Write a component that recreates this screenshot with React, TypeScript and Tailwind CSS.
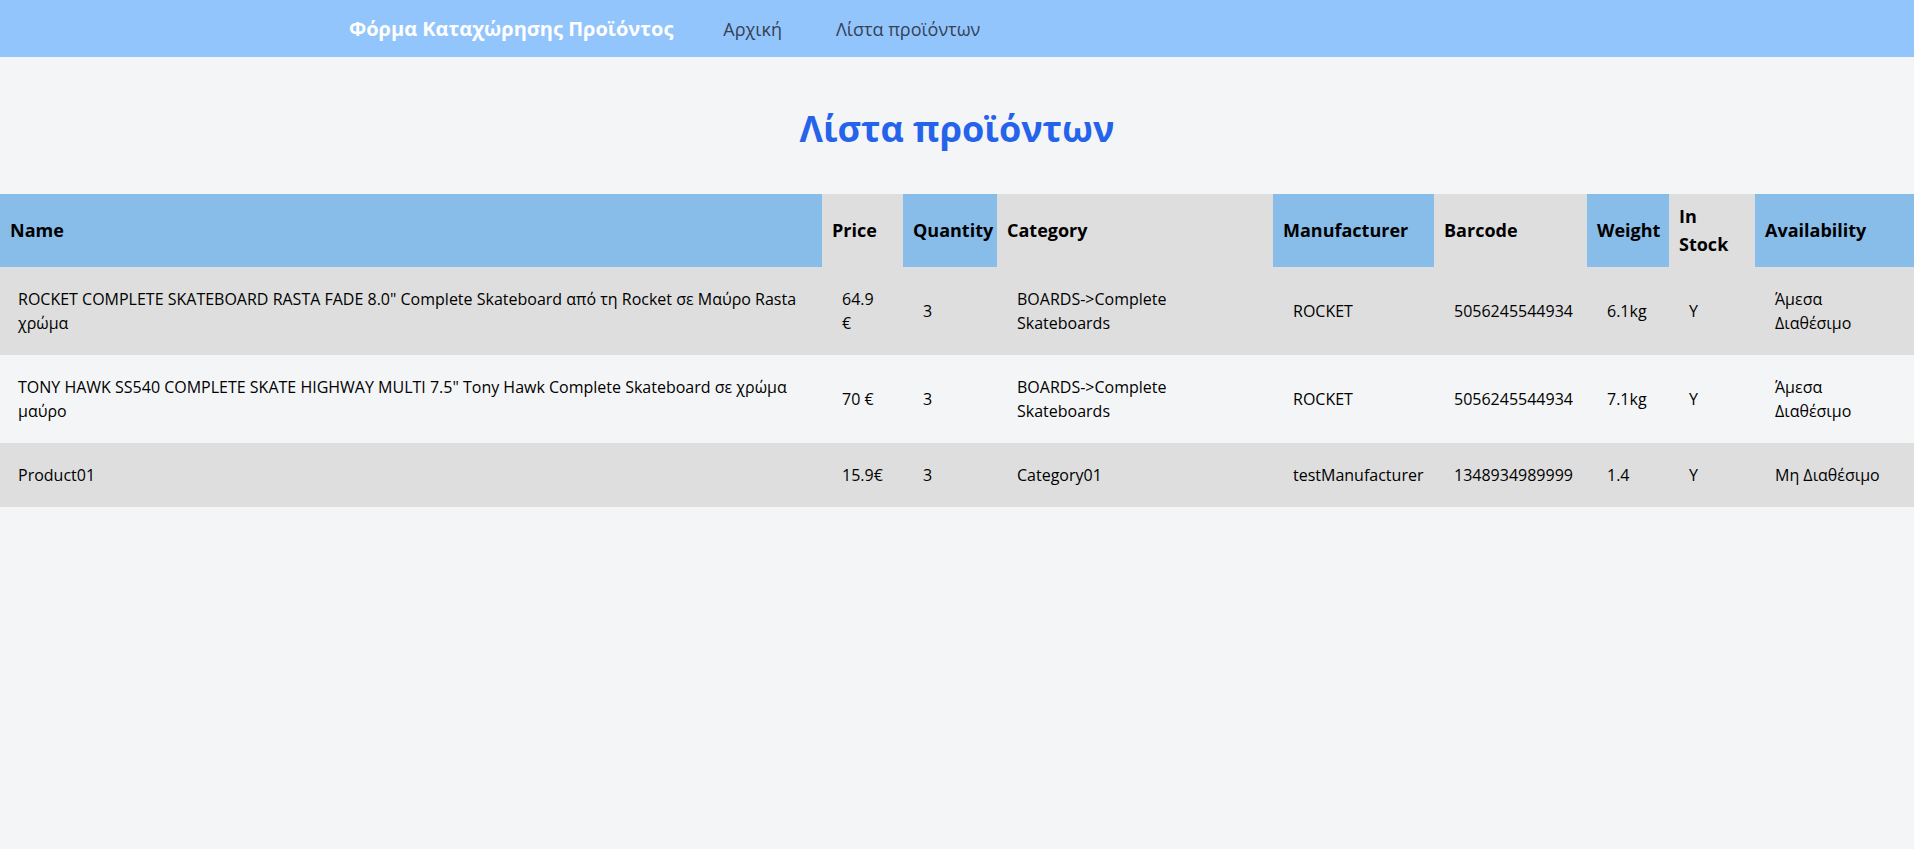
import { useMemo } from 'react';

type Product = {
    id: string;
    name: string;
    price: string;
    quantity: number;
    category: string;
    manufacturer: string;
    barcode: string;
    weight: string;
    inStock: string;
    availability: string;
};

const columns = [
    { key: 'name', label: 'Name', width: 'w-[822px]', blue: true },
    { key: 'price', label: 'Price', width: 'w-[81px]', blue: false },
    { key: 'quantity', label: 'Quantity', width: 'w-[94px]', blue: true },
    { key: 'category', label: 'Category', width: 'w-[276px]', blue: false },
    { key: 'manufacturer', label: 'Manufacturer', width: 'w-[161px]', blue: true },
    { key: 'barcode', label: 'Barcode', width: 'w-[153px]', blue: false },
    { key: 'weight', label: 'Weight', width: 'w-[82px]', blue: true },
    { key: 'inStock', label: 'In Stock', width: 'w-[86px]', blue: false },
    { key: 'availability', label: 'Availability', width: 'w-[159px]', blue: true },
] as const;

export default function App() {
    const products: Product[] = useMemo(() => [
        {
            id: '1',
            name: 'ROCKET COMPLETE SKATEBOARD RASTA FADE 8.0" Complete Skateboard από τη Rocket σε Μαύρο Rasta χρώμα',
            price: '64.9 €',
            quantity: 3,
            category: 'BOARDS->Complete Skateboards',
            manufacturer: 'ROCKET',
            barcode: '5056245544934',
            weight: '6.1kg',
            inStock: 'Y',
            availability: 'Άμεσα Διαθέσιμο',
        },
        {
            id: '2',
            name: 'TONY HAWK SS540 COMPLETE SKATE HIGHWAY MULTI 7.5" Tony Hawk Complete Skateboard σε χρώμα μαύρο',
            price: '70 €',
            quantity: 3,
            category: 'BOARDS->Complete Skateboards',
            manufacturer: 'ROCKET',
            barcode: '5056245544934',
            weight: '7.1kg',
            inStock: 'Y',
            availability: 'Άμεσα Διαθέσιμο',
        },
        {
            id: '3',
            name: 'Product01',
            price: '15.9€',
            quantity: 3,
            category: 'Category01',
            manufacturer: 'testManufacturer',
            barcode: '1348934989999',
            weight: '1.4',
            inStock: 'Y',
            availability: 'Μη Διαθέσιμο',
        },
    ], []);

    return (
        <div className="min-h-screen bg-[#f4f5f7] font-['Open_Sans',sans-serif] text-black">
            {/* Navbar */}
            <nav className="h-[57px] bg-[#93c5fd]">
                <div className="max-w-7xl mx-auto px-8 h-full flex items-center">
                    <a className="text-xl font-bold text-white mr-[50px]">Φόρμα Καταχώρησης Προϊόντος</a>
                    <div className="flex gap-[54px] text-lg text-gray-700">
                        <a>Αρχική</a>
                        <a>Λίστα προϊόντων</a>
                    </div>
                </div>
            </nav>

            <h1 className="text-4xl font-bold text-[#2563eb] text-center mt-[52px] mb-[45px]">Λίστα προϊόντων</h1>

            <table className="w-full table-fixed border-collapse">
                <thead>
                    <tr>
                        {columns.map((c) => (
                            <th key={c.key} className={`${c.width} px-2.5 pt-2 pb-[9px] text-left text-lg font-bold ${c.blue ? 'bg-[#88bde9]' : 'bg-[#dedede]'}`}>
                                {c.label}
                            </th>
                        ))}
                    </tr>
                </thead>
                <tbody>
                    {products.map((p, i) => (
                        <tr key={p.id} className={i % 2 === 0 ? 'bg-[#dedede]' : 'bg-[#f4f5f7]'}>
                            <td className="py-5 pl-[18px] pr-5">{p.name}</td>
                            <td className="p-5">{p.price}</td>
                            <td className="p-5">{p.quantity}</td>
                            <td className="p-5">{p.category}</td>
                            <td className="p-5">{p.manufacturer}</td>
                            <td className="p-5">{p.barcode}</td>
                            <td className="p-5">{p.weight}</td>
                            <td className="p-5">{p.inStock}</td>
                            <td className="p-5">{p.availability}</td>
                        </tr>
                    ))}
                </tbody>
            </table>
        </div>
    );
}
